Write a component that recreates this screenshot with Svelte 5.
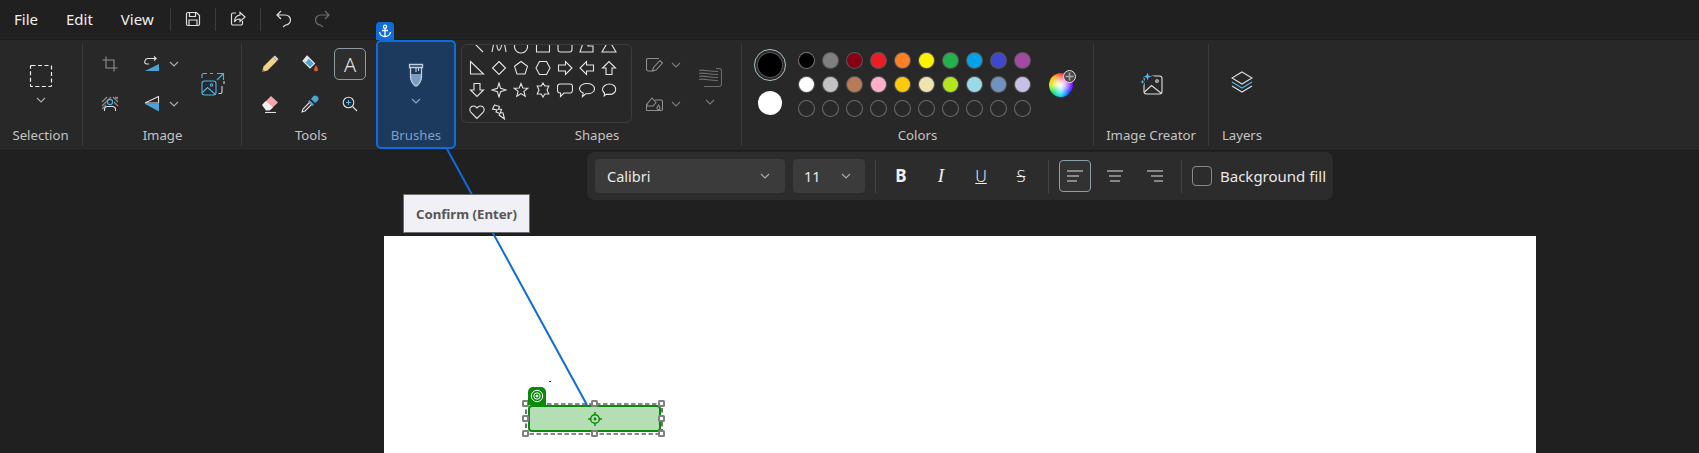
<script>
  const row1 = ['#000000','#7f7f7f','#880015','#ed1c24','#ff7f27','#fff200','#22b14c','#00a2e8','#3f48cc','#a349a4'];
  const row2 = ['#ffffff','#c3c3c3','#b97a57','#ffaec9','#ffc90e','#efe4b0','#b5e61d','#99d9ea','#7092be','#c8bfe7'];
  const shapes = [
    'M2 2 L14 14',
    'M1 14 C3 2 5 2 6 8 C7 14 9 14 11 6 C12 2 14 6 15 14',
    'M8 2 a6.5 6.5 0 1 0 .01 0 Z',
    'M1.5 1 H14.5 V14 H1.5 Z',
    'M3.5 1 H12.5 A2.5 2.5 0 0 1 15 3.5 V11.5 A2.5 2.5 0 0 1 12.5 14 H3.5 A2.5 2.5 0 0 1 1 11.5 V3.5 A2.5 2.5 0 0 1 3.5 1 Z',
    'M5 2 H11 L9 8 H14 V14 H1 Z',
    'M8 2 L15 14 H1 Z',
    'M1.5 1.5 L14.5 14 H1.5 Z',
    'M8 1.5 L14.5 8 L8 14.5 L1.5 8 Z',
    'M8 1.5 L14.5 6.3 L12 14 H4 L1.5 6.3 Z',
    'M4.5 1.5 H11.5 L15 8 L11.5 14.5 H4.5 L1 8 Z',
    'M1.5 5 H8.5 V1.5 L15 8 L8.5 14.5 V11 H1.5 Z',
    'M14.5 5 H7.5 V1.5 L1 8 L7.5 14.5 V11 H14.5 Z',
    'M5 14.5 V8 H1.5 L8 1.5 L14.5 8 H11 V14.5 Z',
    'M5 1.5 V8 H1.5 L8 14.5 L14.5 8 H11 V1.5 Z',
    'M8 1 L9.6 6.4 L15 8 L9.6 9.6 L8 15 L6.4 9.6 L1 8 L6.4 6.4 Z',
    'M8 1.5 L9.8 6 L14.8 6.3 L10.9 9.4 L12.2 14.3 L8 11.6 L3.8 14.3 L5.1 9.4 L1.2 6.3 L6.2 6 Z',
    'M8 1 L9.8 4 L13.8 4 L12 8 L13.8 12 L9.8 12 L8 15 L6.2 12 L2.2 12 L4 8 L2.2 4 L6.2 4 Z',
    'M3 2 H13 A2.5 2.5 0 0 1 15.5 4.5 V8.5 A2.5 2.5 0 0 1 13 11 H7 L3.5 14.5 V11 H3 A2.5 2.5 0 0 1 .5 8.5 V4.5 A2.5 2.5 0 0 1 3 2 Z',
    'M8 1.5 C12 1.5 15.5 3.5 15.5 6.7 C15.5 10 12 11.8 8 11.8 L6.8 11.8 L3.5 14.5 L4.2 11 C2 10 .5 8.6 .5 6.7 C.5 3.5 4 1.5 8 1.5 Z',
    'M8.5 2 C12 2 14.7 4.3 14.7 7.3 C14.7 10.3 12 12.4 8.7 12.4 L5 12.4 L3.2 14 L3.5 11 C2.2 10 1.5 8.7 1.5 7.3 C1.5 4.3 5 2 8.5 2 Z',
    'M8 14.5 L2 8.5 C-.5 5.5 1.5 2 4.5 2 C6 2 7.2 2.8 8 4 C8.8 2.8 10 2 11.5 2 C14.5 2 16.5 5.5 14 8.5 Z',
    'M3.5 1 L8.5 2.5 L7.5 5 L10.5 5.5 L9.5 8.5 L12 9 L13.5 15 L8 11 L9 9.5 L5 8 L6 6 L1.5 5 Z'
  ];
</script>

{#snippet chevron(cls = '')}
  <svg class={`chev ${cls}`} width="10" height="6" viewBox="0 0 10 6"><path d="M1 1 L5 5 L9 1" /></svg>
{/snippet}

<div class="app">
  <header class="titlebar">
    <span class="menu m-file">File</span>
    <span class="menu m-edit">Edit</span>
    <span class="menu m-view">View</span>
    <i class="tsep first"></i>
    <svg class="ticon" width="16" height="16" viewBox="0 0 16 16"><path d="M3 1.5 H11.5 L14.5 4.5 V13 A1.5 1.5 0 0 1 13 14.5 H3 A1.5 1.5 0 0 1 1.5 13 V3 A1.5 1.5 0 0 1 3 1.5 Z M4.5 1.5 V5.5 H10.5 V1.5 M4 14.5 V9 H12 V14.5" /></svg>
    <i class="tsep"></i>
    <svg class="ticon" width="16" height="16" viewBox="0 0 16 16"><path d="M6 2 H3 A1.5 1.5 0 0 0 1.5 3.5 V12.5 A1.5 1.5 0 0 0 3 14 H11 A1.5 1.5 0 0 0 12.5 12.5 V10 M10 1.5 L15 6 L10 10.5 V8 C7.5 8 5.5 9 4.5 11 C4.5 7.5 6.5 4.5 10 4 Z" /></svg>
    <i class="tsep"></i>
    <svg class="ticon undo" width="16" height="18" viewBox="0 0 16 18"><path d="M5 1 L1 5 L5 9 M1 5 H9.5 A5 5 0 0 1 9.5 15 L7 17" /></svg>
    <svg class="ticon redo" width="16" height="18" viewBox="0 0 16 18"><path d="M11 1 L15 5 L11 9 M15 5 H6.5 A5 5 0 0 0 6.5 15 L9 17" /></svg>
  </header>

  <section class="ribbon">
    <div class="group selection">
      <div class="body sel-body">
        <svg width="24" height="24" viewBox="0 0 24 24"><rect class="dash" x="1.5" y="1.5" width="21" height="21" rx="1" /></svg>
        {@render chevron('sel-chev')}
      </div>
      <div class="label">Selection</div>
    </div>

    <div class="group image">
      <div class="body image-grid">
        <div class="cell">
          <svg class="dim" width="16" height="16" viewBox="0 0 16 16"><path d="M4 0.5 V12 H15.5 M0.5 4 H12 V15.5" /></svg>
        </div>
        <div class="cell">
          <svg width="16" height="16" viewBox="0 0 16 16"><path fill="#4ba3d3" stroke="none" d="M15 8 V15 H1 Z" /><path d="M1 5 A3 3 0 0 1 4 2.5 H12 L10 .5 M12 2.5 L10 4.5 M1 5 A2 2 0 0 0 3 8 H5" /></svg>
        </div>
        <div class="cell">{@render chevron()}</div>
        <div class="cell tall">
          <svg width="24" height="24" viewBox="0 0 24 24">
            <path stroke="#d5d5d5" d="M21 14 V20 A1.5 1.5 0 0 1 19.5 21.5 H17.5 M23 9 V12" />
            <path stroke="#4fb3e8" d="M1 6 V3 A1.5 1.5 0 0 1 2.5 1.5 H6 M9 1.5 H12 M16 1.5 H22.5 V8 M22.5 1.5 L16 8" />
            <g stroke="#4fb3e8"><rect x="1" y="9" width="14" height="14" rx="2.5" /><circle cx="10.5" cy="13" r="1.2" /><path d="M1.5 20.5 L6.5 15.5 L14.5 22.5" /></g>
          </svg>
        </div>
        <div class="cell">
          <svg class="dim" width="18" height="16" viewBox="0 0 18 16">
            <path d="M1 6 L6 1 M1 10 L10 1 M1 13 L5 9 M12 1 L17 6 M14 1 L17 3 M13 6 L17 10 M14 3 L17 1" />
            <circle cx="9" cy="6" r="2.6" stroke="#4fb3e8" />
            <path stroke="#e0e0e0" d="M3.5 15 V13 A3 3 0 0 1 6.5 10.5 H11.5 A3 3 0 0 1 14.5 13 V15" />
          </svg>
        </div>
        <div class="cell">
          <svg width="16" height="16" viewBox="0 0 16 16"><path fill="#4ba3d3" stroke="none" d="M1 8 H15 V15.5 Z" /><path d="M1 7 L14.5 .5 V7 Z" /></svg>
        </div>
        <div class="cell">{@render chevron()}</div>
      </div>
      <div class="label">Image</div>
    </div>

    <div class="group tools">
      <div class="body tools-grid">
        <div class="cell">
          <svg width="18" height="18" viewBox="0 0 18 18"><path fill="#f2d08a" stroke="none" d="M1 17 L2.5 11.5 L12 2 L16 6 L6.5 15.5 Z" /><path fill="#cfcfcf" stroke="none" d="M12 2 L14 .5 L17.5 4 L16 6 Z" /><path fill="#6b5a3a" stroke="none" d="M1 17 L1.7 14.3 L3.7 16.3 Z" /></svg>
        </div>
        <div class="cell">
          <svg width="18" height="18" viewBox="0 0 18 18"><path fill="#4ba3d3" stroke="#e8e8e8" d="M6 1 L13.5 8.5 L9 13 L2 6 Z" /><path fill="#e8e8e8" stroke="none" d="M2.5 5.5 L6 1.5 L8 3.5 L4.5 7.5 Z" /><path fill="#e2572b" stroke="none" d="M15 10 C16 12 17 13 17 14.5 A2 2 0 0 1 13 14.5 C13 13 14 12 15 10 Z" /></svg>
        </div>
        <div class="cell">
          <div class="text-tool">A</div>
        </div>
        <div class="cell">
          <svg width="18" height="18" viewBox="0 0 18 18"><path fill="#f3a8a8" stroke="none" d="M1.5 9.5 L10 1 L17 7.5 L9 15 Z" /><path fill="#f0f0f0" stroke="none" d="M1 10 L5 6 L12 12.5 L8.5 15.5 H5 Z" /><path d="M4 17.5 H15" /></svg>
        </div>
        <div class="cell">
          <svg width="18" height="18" viewBox="0 0 18 18"><path fill="#4ba3d3" stroke="none" d="M10 4 L12 1.5 A2.5 2.5 0 0 1 16.5 6 L14 8 Z M8.5 5 L13 9.5 L11.5 11 L7 6.5 Z" /><path d="M8.5 7.5 L2 14 L1 17 L4 16 L10.5 9.5" /></svg>
        </div>
        <div class="cell">
          <svg width="16" height="16" viewBox="0 0 16 16"><circle cx="6.5" cy="6.5" r="5.3" /><path d="M10.5 10.5 L15 15" /><path stroke="#55b6ec" d="M6.5 4 V9 M4 6.5 H9" /></svg>
        </div>
      </div>
      <div class="label">Tools</div>
    </div>

    <div class="brushes">
      <div class="anchor">
        <svg width="14" height="14" viewBox="0 0 14 14"><circle cx="7" cy="2.8" r="1.6" /><path d="M7 4.4 V12.5 M4 6.5 H10 M1.5 8 C2 11 4.5 12.5 7 12.5 C9.5 12.5 12 11 12.5 8" /></svg>
      </div>
      <div class="body brush-body">
        <svg width="16" height="24" viewBox="0 0 16 24">
          <path fill="#7d9cc0" stroke="none" d="M2.5 11 H13.5 V14 C13.5 18 10 23 8 23 C6 23 2.5 18 2.5 14 Z" />
          <path stroke="#c2d0de" stroke-width="1.3" d="M1.5 1.5 H14.5 V4.5 H1.5 Z M2.5 4.5 V14 C2.5 18 6 23 8 23 C10 23 13.5 18 13.5 14 V4.5" />
          <path stroke="#c2d0de" d="M8 5 V9 M10.5 5 V8" />
        </svg>
        {@render chevron('brush-chev')}
      </div>
      <div class="label brush-label">Brushes</div>
    </div>

    <div class="group shapes">
      <div class="body shapes-body">
        <div class="gallery">
          <div class="gallery-grid">
            {#each shapes as d}
              <div class="cell"><svg width="16" height="16" viewBox="0 0 16 16"><path {d} /></svg></div>
            {/each}
          </div>
        </div>
        <div class="outline-col">
          <div class="opt">
            <svg class="dim" width="17" height="14" viewBox="0 0 17 14"><path d="M8 13 H2 A1.5 1.5 0 0 1 .5 11.5 V2 A1.5 1.5 0 0 1 2 .5 H13 M6.5 13 L7.5 9.5 L14 2.5 L16.5 5 L10 12 Z" /></svg>
            {@render chevron('dimmer')}
          </div>
          <div class="opt">
            <svg class="dim" width="17" height="14" viewBox="0 0 17 14"><path d="M9 3 H15 A1.5 1.5 0 0 1 16.5 4.5 V12 A1.5 1.5 0 0 1 15 13.5 H2 A1 1 0 0 1 .5 12 V7 M1 7 L6 1 L10 5.5 L7 9 H1 Z M12.5 8 C13.5 9.5 14 10 14 11 A1.5 1.5 0 0 1 11 11 C11 10 12 9 12.5 8 Z" /></svg>
            {@render chevron('dimmer')}
          </div>
        </div>
        <div class="size-col">
          <svg class="dim2" width="24" height="19" viewBox="0 0 24 19"><path d="M18 .5 H21 A2.5 2.5 0 0 1 23.5 3 V16 A2.5 2.5 0 0 1 21 18.5 H6 M1 2.5 C6 1 12 4 20 3.5 M1 5.5 C6 4 12 7 20 6.5 M1 8.5 C6 7 12 10 20 9.5 M1 11.5 C6 10 12 13 20 12.5" /></svg>
          {@render chevron('dimmer')}
        </div>
      </div>
      <div class="label shapes-label">Shapes</div>
    </div>

    <div class="group colors">
      <div class="body colors-body">
        <div class="current">
          <div class="color1"><span></span></div>
          <div class="color2"></div>
        </div>
        <div class="palette">
          {#each row1 as c, i}
            <div class="swatch" class:darkest={i === 0} style:background={c}></div>
          {/each}
          {#each row2 as c}
            <div class="swatch" style:background={c}></div>
          {/each}
          {#each row1 as _}
            <div class="swatch empty"></div>
          {/each}
        </div>
        <div class="wheel">
          <div class="plus">
            <svg width="9" height="9" viewBox="0 0 9 9"><path d="M4.5 .5 V8.5 M.5 4.5 H8.5" /></svg>
          </div>
        </div>
      </div>
      <div class="label">Colors</div>
    </div>

    <div class="group creator">
      <div class="body single">
        <svg width="24" height="24" viewBox="0 0 24 24">
          <rect x="5" y="5" width="18" height="18" rx="2.5" />
          <circle cx="18" cy="10" r="1.3" />
          <path d="M5.5 21 L12.5 14.5 L22.5 22.5" />
          <path fill="#4cb8f5" stroke="#282828" d="M8.5 0 L10 4 L14 5.5 L10 7 L8.5 11 L7 7 L3 5.5 L7 4 Z M3.5 7 L4.5 9.8 L7 11 L4.5 12 L3.5 15 L2.5 12 L0 11 L2.5 9.8 Z" />
        </svg>
      </div>
      <div class="label">Image Creator</div>
    </div>

    <div class="group layers">
      <div class="body single">
        <svg width="22" height="22" viewBox="0 0 22 22">
          <path d="M11 1 L21 7 L11 13 L1 7 Z" />
          <path stroke="#4cb8f5" d="M1 11 L11 17 L21 11" />
          <path d="M1 15 L11 21 L21 15" />
        </svg>
      </div>
      <div class="label">Layers</div>
    </div>
  </section>

  <main class="workspace">
    <div class="textbar">
      <div class="select font"><span>Calibri</span>{@render chevron()}</div>
      <div class="select size"><span>11</span>{@render chevron()}</div>
      <i class="bsep"></i>
      <span class="fmt b">B</span>
      <span class="fmt i">I</span>
      <span class="fmt u">U</span>
      <span class="fmt s">S</span>
      <i class="bsep mid"></i>
      <div class="align active">
        <svg width="18" height="12" viewBox="0 0 18 12"><path d="M1 1 H17 M1 6 H13 M1 11 H11" /></svg>
      </div>
      <div class="align">
        <svg width="18" height="12" viewBox="0 0 18 12"><path d="M1 1 H17 M3 6 H15 M4 11 H14" /></svg>
      </div>
      <div class="align">
        <svg width="18" height="12" viewBox="0 0 18 12"><path d="M1 1 H17 M5 6 H17 M8 11 H17" /></svg>
      </div>
      <i class="bsep"></i>
      <div class="check"></div>
      <span class="check-label">Background fill</span>
    </div>

    <div class="canvas">
      <i class="speck"></i>
      <div class="sel-box">
        <svg class="dashes" width="139" height="32" viewBox="0 0 139 32"><rect x="1" y="1" width="136" height="30" /></svg>
        <i class="h h1"></i><i class="h h2"></i><i class="h h3"></i>
        <i class="h h4"></i><i class="h h5"></i>
        <i class="h h6"></i><i class="h h7"></i><i class="h h8"></i>
      </div>
      <div class="target-tab">
        <svg width="14" height="14" viewBox="0 0 14 14"><circle cx="7" cy="7" r="5.7" /><circle cx="7" cy="7" r="3.2" /><circle class="filled" cx="7" cy="7" r="1" /></svg>
      </div>
      <div class="target">
        <svg width="14" height="14" viewBox="0 0 14 14"><circle cx="7" cy="7" r="4.3" /><circle class="filled" cx="7" cy="7" r="1.4" /><path d="M7 0 V3 M7 11 V14 M0 7 H3 M11 7 H14" /></svg>
      </div>
    </div>
  </main>

  <svg class="connector" width="1699" height="453" viewBox="0 0 1699 453"><path d="M447 149 L587 405" /></svg>
  <div class="tooltip">Confirm (Enter)</div>
</div>

<style>
  :global(body) { margin: 0; background: #202020; }
  .app {
    position: relative;
    width: 1699px;
    height: 453px;
    overflow: hidden;
    background: #202020;
    color: #e8e8e8;
    font-family: "Noto Sans", "Open Sans", sans-serif;
  }
  svg { display: block; fill: none; stroke: #e0e0e0; stroke-width: 1.1; flex: none; }
  i { display: block; }

  .titlebar { display: flex; align-items: center; height: 39px; box-sizing: border-box; padding-bottom: 1px; }
  .menu { font-size: 15px; color: #f0f0f0; }
  .m-file { margin-left: 14px; }
  .m-edit { margin-left: 28px; }
  .m-view { margin-left: 28px; }
  .tsep { width: 1px; height: 23px; background: #3c3c3c; margin: 0 14px; }
  .tsep.first { margin-left: 16px; }
  .undo { margin-left: 1px; }
  .redo { margin-left: 22px; opacity: .4; }
  .ticon { stroke-width: 1.2; }

  .ribbon { display: flex; height: 112px; box-sizing: border-box; background: #282828; border-top: 1px solid #1c1c1c; border-bottom: 1px solid #1c1c1c; }
  .group { display: flex; flex-direction: column; margin-top: 4px; height: 102px; box-sizing: border-box; }
  .body { height: 80px; }
  .label { height: 22px; line-height: 22px; text-align: center; font-size: 13.2px; color: #c4c4c4; }
  .cell { display: flex; align-items: center; justify-content: center; }
  .chev { stroke: #aeaeae; stroke-width: 1.1; }
  .dim { stroke: #8f8f8f; }
  .dim2 { stroke: #6e6e6e; }
  .dimmer { stroke: #7c7c7c; }

  .selection { width: 83px; border-right: 1px solid #3a3a3a; padding-right: 1px; }
  .sel-body { display: flex; flex-direction: column; align-items: center; padding-top: 20px; box-sizing: border-box; }
  .dash { stroke: #f0f0f0; stroke-width: 1.2; stroke-dasharray: 4 2.5; }
  .sel-chev { margin-top: 9px; }

  .image { width: 159px; border-right: 1px solid #3a3a3a; padding-left: 1px; box-sizing: border-box; }
  .image-grid { display: grid; grid-template-columns: 52px 32px 12px 66px; grid-template-rows: 40px 40px; }
  .tall { grid-column: 4; grid-row: 1 / span 2; }

  .tools { width: 130px; padding-left: 8px; }
  .tools-grid { display: grid; grid-template-columns: 40px 40px 40px; grid-template-rows: 40px 40px; }
  .text-tool { width: 30px; height: 30px; border: 1px solid #8b9ca1; border-radius: 5px; display: flex; align-items: center; justify-content: center; font-size: 20px; font-weight: 300; color: #e6e6e6; background: #2e2e2e; }

  .brushes { position: relative; width: 80px; height: 109px; box-sizing: border-box; margin: 0 0 0 4px; background: #1b3a5e; border: 2px solid #0f6cdb; border-radius: 5px; display: flex; flex-direction: column; }
  .anchor { position: absolute; left: -2px; top: -20px; width: 18px; height: 18px; background: #0f6cdb; border-radius: 4px 4px 0 0; display: flex; align-items: center; justify-content: center; }
  .anchor svg { stroke: #fff; stroke-width: 1.3; }
  .brush-body { display: flex; flex-direction: column; align-items: center; padding-top: 21px; box-sizing: border-box; height: 82px; }
  .brush-chev { margin-top: 11px; stroke: #8faac9; }
  .brush-label { color: #7f9fc6; }

  .shapes { width: 286px; border-right: 1px solid #3a3a3a; box-sizing: border-box; }
  .shapes-body { display: flex; }
  .gallery { width: 171px; height: 79px; margin-left: 5px; box-sizing: border-box; border: 1px solid #3c3c3c; border-radius: 6px; overflow: hidden; }
  .gallery-grid { display: grid; grid-template-columns: repeat(7, 22px); grid-auto-rows: 22px; margin: -10px 0 0 4px; }
  .gallery svg { stroke: #e4e4e4; stroke-width: 1.1; }
  .outline-col { width: 52px; margin-left: 14px; display: flex; flex-direction: column; padding-top: 13px; gap: 23px; box-sizing: border-box; }
  .opt { display: flex; align-items: center; gap: 8px; height: 16px; }
  .size-col { display: flex; flex-direction: column; align-items: center; padding-top: 24px; gap: 12px; width: 24px; box-sizing: border-box; }
  .shapes-label { width: 282px; }

  .colors { width: 352px; border-right: 1px solid #3a3a3a; box-sizing: border-box; }
  .colors-body { display: flex; padding-left: 4px; }
  .current { width: 48px; display: flex; flex-direction: column; align-items: center; padding-top: 5px; gap: 10px; box-sizing: border-box; }
  .color1 { width: 32px; height: 32px; box-sizing: border-box; border: 1px solid #a8c4c9; border-radius: 50%; display: flex; align-items: center; justify-content: center; }
  .color1 span { display: block; width: 24px; height: 24px; background: #000; border-radius: 50%; box-shadow: 0 0 0 1px #555; }
  .color2 { width: 24px; height: 24px; background: #fff; border-radius: 50%; }
  .palette { display: grid; grid-template-columns: repeat(10, 24px); grid-auto-rows: 24px; padding-top: 4px; }
  .swatch { width: 15px; height: 15px; margin: 4.5px; border-radius: 50%; box-shadow: 0 0 0 1px rgba(255,255,255,.22); }
  .swatch.darkest { box-shadow: 0 0 0 1px rgba(255,255,255,.35); }
  .swatch.empty { background: transparent; box-shadow: 0 0 0 1px #6a6a6a; }
  .wheel { position: relative; width: 24px; height: 24px; margin: 29px 0 0 15px; border-radius: 50%; background: radial-gradient(circle, #fff 0, rgba(255,255,255,.75) 25%, rgba(255,255,255,0) 70%), conic-gradient(#ff3030, #ff00c8, #7a00ff, #0040ff, #00d8ff, #00e070, #c8f000, #ffb000, #ff3030); }
  .plus { position: absolute; right: -3px; top: -3px; width: 11px; height: 11px; border-radius: 50%; background: #4a4a4a; border: 1px solid #e0e0e0; display: flex; align-items: center; justify-content: center; }
  .plus svg { stroke: #a8a8a8; stroke-width: 1.5; }

  .single { display: flex; justify-content: center; padding-top: 27px; box-sizing: border-box; }
  .creator { width: 115px; border-right: 1px solid #3a3a3a; box-sizing: border-box; }
  .layers { width: 66px; }

  .workspace { display: flex; flex-direction: column; }
  .textbar { display: flex; align-items: center; width: 746px; height: 48px; box-sizing: border-box; margin: 1px 0 36px 587px; padding-left: 8px; background: #2c2c2c; border-radius: 7px; }
  .select { display: flex; align-items: center; justify-content: space-between; height: 34px; box-sizing: border-box; background: #3b3b3b; border-radius: 4px; font-size: 14.5px; color: #eaeaea; }
  .font { width: 190px; padding: 0 15px 0 12px; }
  .size { width: 72px; margin-left: 8px; padding: 0 14px 0 11px; }
  .bsep { width: 1px; height: 33px; background: #444; margin-left: 10px; }
  .bsep.mid { margin-left: 7px; }
  .fmt { width: 40px; text-align: center; font-size: 16px; line-height: 20px; color: #f0f0f0; }
  .b { font-weight: 700; margin-left: 5px; font-size: 17px; }
  .i { font-style: italic; font-weight: 300; font-family: "Liberation Serif", serif; font-size: 19px; }
  .u { text-decoration: underline; font-weight: 300; }
  .s { text-decoration: line-through; font-weight: 300; }
  .align { width: 32px; height: 32px; margin-left: 8px; box-sizing: border-box; display: flex; align-items: center; justify-content: center; border: 1px solid transparent; border-radius: 4px; }
  .align.active { margin-left: 10px; background: #323232; border-color: #8ba0a6; }
  .check { width: 20px; height: 20px; box-sizing: border-box; margin-left: 10px; border: 1px solid #8a8a8a; border-radius: 4px; }
  .check-label { margin-left: 8px; font-size: 15px; color: #e8e8e8; white-space: nowrap; }

  .canvas { position: relative; width: 1152px; height: 240px; margin-left: 384px; background: #fff; }
  .speck { position: absolute; left: 165px; top: 145px; width: 2px; height: 1px; background: #333; }
  .sel-box { position: absolute; left: 144px; top: 169px; width: 133px; height: 27px; box-sizing: border-box; background: #b5deb5; border: 2px solid #0a8a0a; border-radius: 4px; }
  .dashes { position: absolute; left: -5px; top: -4px; }
  .dashes rect { stroke: #111; stroke-width: 1.2; stroke-dasharray: 4.5 2.5; }
  .h { position: absolute; width: 7px; height: 7px; box-sizing: border-box; background: #fff; border: 2px solid #808080; border-radius: 1.5px; }
  .h1 { left: -8px; top: -7px; } .h2 { left: 61px; top: -7px; } .h3 { left: 128px; top: -7px; }
  .h4 { left: -8px; top: 8px; } .h5 { left: 128px; top: 8px; }
  .h6 { left: -8px; top: 23px; } .h7 { left: 61px; top: 23px; } .h8 { left: 128px; top: 23px; }
  .target-tab { position: absolute; left: 144px; top: 151px; width: 18px; height: 18px; background: #0a8a0a; border-radius: 5px 5px 0 0; display: flex; align-items: center; justify-content: center; }
  .target-tab svg { stroke: #fff; stroke-width: 1; }
  .target-tab .filled { fill: #fff; }
  .target { position: absolute; left: 204px; top: 176px; }
  .target svg { stroke: #0a8a0a; stroke-width: 1.5; }
  .target .filled { fill: #0a8a0a; stroke: none; }

  .connector { position: absolute; left: 0; top: 0; pointer-events: none; }
  .connector path { stroke: #0f6cdb; stroke-width: 2; }
  .tooltip { position: absolute; left: 403px; top: 194px; width: 127px; height: 39px; box-sizing: border-box; background: #f0f0f6; border: 1px solid #6e6e6e; display: flex; align-items: center; justify-content: center; color: #555; font-size: 13.2px; font-weight: 700; }
</style>
